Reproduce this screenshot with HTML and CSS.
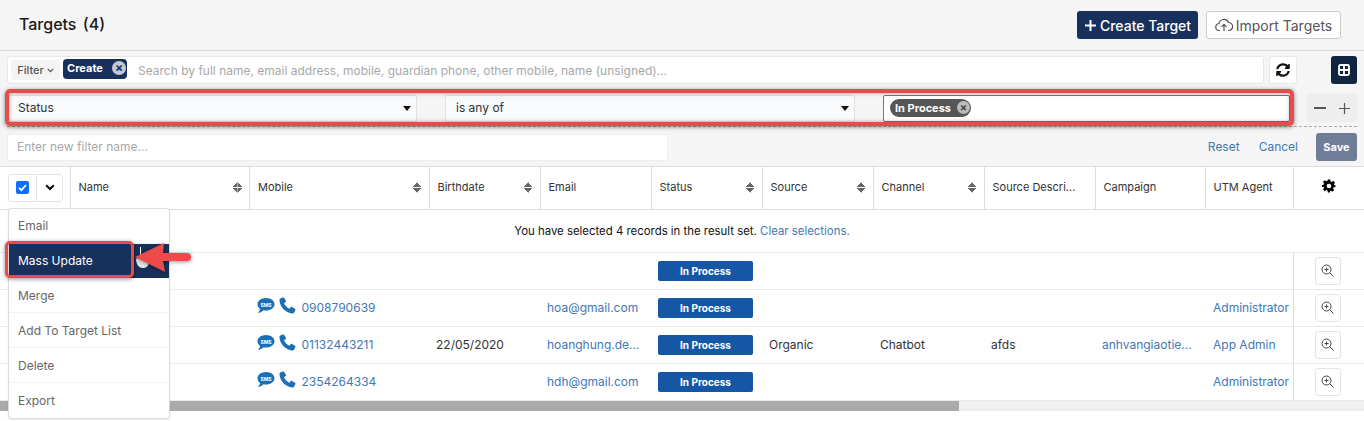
FILE: index.html
```html
<!DOCTYPE html>
<html>
<head>
	<meta charset="utf-8">
	<title>Targets</title>
	<link rel="stylesheet" href="styles.css">
</head>
<body>
	<div class="page">
		<div class="top">
			<h1 class="title">Targets <span class="count">(4)</span></h1>
			<div class="top-btns">
				<button class="btn-create"><svg width="13" height="13" viewBox="0 0 13 13"><path d="M6.500 1v11M1 6.500h11" stroke="#fff" stroke-width="2"/></svg>Create Target</button>
				<button class="btn-import"><svg width="18" height="14" viewBox="0 0 18 14" fill="none" stroke="#555" stroke-width="1.2"><path d="M5 12.500H4.500a3.500 3.500 0 0 1-.5-7 5 5 0 0 1 9.500-1 3.900 3.900 0 0 1 .2 8H13"/><path d="M9 13V6.500M6.500 8.800 9 6.300l2.500 2.500"/></svg>Import Targets</button>
			</div>
		</div>

		<div class="filters">
			<div class="search-row">
				<div class="search">
					<span class="filter-label">Filter <svg width="7" height="5" viewBox="0 0 7 5"><path d="M.7.800 3.500 3.600 6.300.800" fill="none" stroke="#555" stroke-width="1.200"/></svg></span>
					<span class="tag-create"><span class="tag-text">Create</span> <i class="tag-x">×</i></span>
					<span class="placeholder">Search by full name, email address, mobile, guardian phone, other mobile, name (unsigned)...</span>
				</div>
				<button class="btn-refresh"><svg width="14" height="14" viewBox="0 0 512 512"><path fill="#111" d="M370.720 133.280C339.458 104.008 298.888 87.962 255.848 88c-77.458.068-144.328 53.178-162.791 126.850-1.344 5.363-6.122 9.150-11.651 9.150H24.103c-7.498 0-13.194-6.807-11.807-14.176C33.933 94.924 134.813 8 256 8c66.448 0 126.791 26.136 171.315 68.685L463.030 40.970C478.149 25.851 504 36.559 504 57.941V192c0 13.255-10.745 24-24 24H345.941c-21.382 0-32.090-25.851-16.971-40.971l41.750-41.749zM32 296h134.059c21.382 0 32.090 25.851 16.971 40.971l-41.750 41.750c31.262 29.273 71.835 45.319 114.876 45.280 77.418-.07 144.315-53.144 162.787-126.849 1.344-5.363 6.122-9.150 11.651-9.150h57.304c7.498 0 13.194 6.807 11.807 14.176C478.067 417.076 377.187 504 256 504c-66.448 0-126.791-26.136-171.315-68.685L48.970 471.030C33.851 486.149 8 475.441 8 454.059V320c0-13.255 10.745-24 24-24z"/></svg></button>
				<button class="btn-grid"><svg width="12" height="12" viewBox="0 0 12 12" fill="none" stroke="#fff" stroke-width="1.800"><rect x="1" y="1" width="10" height="10" rx="1.500"/><path d="M1 6h10M6 1v10"/></svg></button>
			</div>

			<div class="cond-row">
				<div class="cond-sel cond-field"><span class="cond-text">Status</span><span class="caret"></span></div>
				<div class="cond-sel cond-op"><span class="cond-text">is any of</span><span class="caret"></span></div>
				<div class="cond-val"><span class="tag-val">In Process <i class="tag-val-x">×</i></span></div>
				<div class="cond-btns"><svg width="12" height="2" viewBox="0 0 12 2"><path d="M0 1h12" stroke="#555" stroke-width="2"/></svg><svg width="11" height="11" viewBox="0 0 11 11"><path d="M5.500 0v11M0 5.500h11" stroke="#555" stroke-width="1.200"/></svg></div>
				<div class="mark mark-filter"></div>
			</div>

			<div class="name-row">
				<div class="name-input">Enter new filter name...</div>
				<div class="name-actions">
					<a class="link">Reset</a>
					<a class="link">Cancel</a>
					<button class="btn-save">Save</button>
				</div>
			</div>
		</div>

		<div class="table-wrap">
			<table class="grid">
				<colgroup>
					<col class="c-check"><col class="c-wide"><col class="c-wide"><col class="c-std"><col class="c-std"><col class="c-std"><col class="c-std"><col class="c-std"><col class="c-std"><col class="c-camp"><col class="c-agent"><col>
				</colgroup>
				<thead>
					<tr>
						<th class="check-th"><div class="check-group"><span class="check-cell"><svg width="13" height="13" viewBox="0 0 13 13"><rect width="13" height="13" rx="2" fill="#0d6efd"/><path d="M3 6.800 5.400 9.200 10 4" fill="none" stroke="#fff" stroke-width="1.800"/></svg></span><span class="check-more"><svg width="10" height="7" viewBox="0 0 10 7"><path d="M1.200 1.200 5 5l3.800-3.800" fill="none" stroke="#000" stroke-width="2"/></svg></span></div></th>
						<th><div class="th-in">Name<span class="sort"></span></div></th>
						<th><div class="th-in">Mobile<span class="sort"></span></div></th>
						<th><div class="th-in">Birthdate<span class="sort"></span></div></th>
						<th><div class="th-in">Email</div></th>
						<th><div class="th-in">Status<span class="sort"></span></div></th>
						<th><div class="th-in">Source<span class="sort"></span></div></th>
						<th><div class="th-in">Channel<span class="sort"></span></div></th>
						<th><div class="th-in">Source Descri...</div></th>
						<th><div class="th-in">Campaign</div></th>
						<th><div class="th-in">UTM Agent</div></th>
						<th class="gear-th"><svg width="14" height="14" viewBox="0 0 24 24"><path fill="#000" fill-rule="evenodd" d="M10 1h4l.7 3.200 1.900.8 2.800-1.800 2.800 2.800-1.800 2.800.8 1.900L23 10.400v3.200l-3.200.7-.8 1.900 1.800 2.800-2.800 2.800-2.800-1.800-1.900.8L14 23h-4l-.7-3.200-1.900-.8-2.800 1.800-2.800-2.800 1.800-2.800-.8-1.900L0 13.600v-3.200l2.800-.7.800-1.900L1.800 5l2.800-2.800 2.800 1.800 1.900-.8zM12 8a4 4 0 1 0 0 8 4 4 0 0 0 0-8z"/></svg></th>
					</tr>
				</thead>
				<tbody>
					<tr class="sel-row">
						<td colspan="12">You have selected 4 records in the result set. <a class="link">Clear selections.</a></td>
					</tr>
					<tr>
						<td></td><td></td><td></td><td></td><td></td>
						<td><span class="badge">In Process</span></td>
						<td></td><td></td><td></td><td></td><td></td>
						<td class="act"><button class="btn-zoom"><svg width="13" height="13" viewBox="0 0 13 13" fill="none" stroke="#444" stroke-width="1"><circle cx="5.500" cy="5.500" r="4.500"/><path d="M8.800 8.800 12.500 12.500M5.500 3.500v4M3.500 5.500h4"/></svg></button></td>
					</tr>
					<tr>
						<td></td><td></td>
						<td><span class="phone"><svg class="ic-sms" width="18" height="16" viewBox="0 0 18 16"><path fill="#1a6fb5" d="M9 0c4.700 0 8.500 2.800 8.500 6.300S13.700 12.600 9 12.600c-.9 0-1.700-.1-2.500-.3C5.200 13.800 3.200 14.800.8 15c1.200-1 2-2.300 2.200-4C1.500 9.800.5 8.200.5 6.300.5 2.800 4.300 0 9 0z"/><text x="9" y="8.500" class="sms-txt">SMS</text></svg><svg class="ic-phone" width="17" height="17" viewBox="0 0 17 17"><path fill="#1a6fb5" d="M3.800.5 1.300 1.600C.6 2 .4 2.800.5 3.600c.6 6.500 5.900 12.200 12.800 12.900.8.100 1.500-.2 1.900-.9l1.200-2.500c.2-.5.100-1-.4-1.300l-3-1.900c-.4-.3-1-.2-1.300.2l-1.300 1.600C8 10.600 6 8.600 5 6.200L6.700 5c.4-.3.500-.9.200-1.300L5 .8C4.800.4 4.300.3 3.800.5z"/></svg><a class="link">0908790639</a></span></td>
						<td></td>
						<td><a class="link">hoa@gmail.com</a></td>
						<td><span class="badge">In Process</span></td>
						<td></td><td></td><td></td><td></td>
						<td class="agent"><a class="link">Administrator</a></td>
						<td class="act"><button class="btn-zoom"><svg width="13" height="13" viewBox="0 0 13 13" fill="none" stroke="#444" stroke-width="1"><circle cx="5.500" cy="5.500" r="4.500"/><path d="M8.800 8.800 12.500 12.500M5.500 3.500v4M3.500 5.500h4"/></svg></button></td>
					</tr>
					<tr>
						<td></td><td></td>
						<td><span class="phone"><svg class="ic-sms" width="18" height="16" viewBox="0 0 18 16"><path fill="#1a6fb5" d="M9 0c4.700 0 8.500 2.800 8.500 6.300S13.700 12.600 9 12.600c-.9 0-1.700-.1-2.500-.3C5.200 13.800 3.200 14.800.8 15c1.200-1 2-2.300 2.200-4C1.500 9.800.5 8.200.5 6.300.5 2.800 4.300 0 9 0z"/><text x="9" y="8.500" class="sms-txt">SMS</text></svg><svg class="ic-phone" width="17" height="17" viewBox="0 0 17 17"><path fill="#1a6fb5" d="M3.800.5 1.300 1.600C.6 2 .4 2.800.5 3.600c.6 6.500 5.900 12.200 12.800 12.900.8.100 1.500-.2 1.900-.9l1.200-2.500c.2-.5.100-1-.4-1.300l-3-1.900c-.4-.3-1-.2-1.300.2l-1.300 1.600C8 10.600 6 8.600 5 6.200L6.700 5c.4-.3.500-.9.200-1.300L5 .8C4.800.4 4.300.3 3.800.5z"/></svg><a class="link">01132443211</a></span></td>
						<td>22/05/2020</td>
						<td><a class="link">hoanghung.de...</a></td>
						<td><span class="badge">In Process</span></td>
						<td>Organic</td>
						<td>Chatbot</td>
						<td>afds</td>
						<td><a class="link">anhvangiaotie...</a></td>
						<td class="agent"><a class="link">App Admin</a></td>
						<td class="act"><button class="btn-zoom"><svg width="13" height="13" viewBox="0 0 13 13" fill="none" stroke="#444" stroke-width="1"><circle cx="5.500" cy="5.500" r="4.500"/><path d="M8.800 8.800 12.500 12.500M5.500 3.500v4M3.500 5.500h4"/></svg></button></td>
					</tr>
					<tr>
						<td></td><td></td>
						<td><span class="phone"><svg class="ic-sms" width="18" height="16" viewBox="0 0 18 16"><path fill="#1a6fb5" d="M9 0c4.700 0 8.500 2.800 8.500 6.300S13.700 12.600 9 12.600c-.9 0-1.700-.1-2.500-.3C5.200 13.800 3.200 14.800.8 15c1.200-1 2-2.300 2.200-4C1.500 9.800.5 8.200.5 6.300.5 2.800 4.300 0 9 0z"/><text x="9" y="8.500" class="sms-txt">SMS</text></svg><svg class="ic-phone" width="17" height="17" viewBox="0 0 17 17"><path fill="#1a6fb5" d="M3.800.5 1.300 1.600C.6 2 .4 2.800.5 3.600c.6 6.500 5.900 12.200 12.800 12.900.8.100 1.500-.2 1.900-.9l1.200-2.500c.2-.5.100-1-.4-1.300l-3-1.900c-.4-.3-1-.2-1.300.2l-1.300 1.600C8 10.600 6 8.600 5 6.200L6.700 5c.4-.3.500-.9.200-1.300L5 .8C4.800.4 4.300.3 3.800.5z"/></svg><a class="link">2354264334</a></span></td>
						<td></td>
						<td><a class="link">hdh@gmail.com</a></td>
						<td><span class="badge">In Process</span></td>
						<td></td><td></td><td></td><td></td>
						<td class="agent"><a class="link">Administrator</a></td>
						<td class="act"><button class="btn-zoom"><svg width="13" height="13" viewBox="0 0 13 13" fill="none" stroke="#444" stroke-width="1"><circle cx="5.500" cy="5.500" r="4.500"/><path d="M8.800 8.800 12.500 12.500M5.500 3.500v4M3.500 5.500h4"/></svg></button></td>
					</tr>
				</tbody>
			</table>
			<div class="scrollbar"><div class="thumb"></div></div>

			<ul class="menu">
				<li>Email</li>
				<li class="active">Mass Update</li>
				<li>Merge</li>
				<li>Add To Target List</li>
				<li>Delete</li>
				<li>Export</li>
			</ul>
			<div class="mark mark-item"></div>
			<svg class="cursor" width="16" height="22" viewBox="0 0 16 22"><path d="M5 0h1v10H5z" fill="#fff"/><path d="M1 12c3-2 11-2 13 0 1 4-1 9-6 9s-7-5-7-9z" fill="#e8e8e8"/></svg>
			<svg class="arrow" width="60" height="34" viewBox="0 0 60 34"><path d="M1 16 30 2l-1 10h24a4 4 0 0 1 0 8H29l2 11z" fill="#ed4a4a"/></svg>
		</div>
	</div>
</body>
</html>
```

FILE: styles.css
```css
* {
	margin: 0;
	padding: 0;
	box-sizing: border-box;
}
body {
	background: #fff;
	font-family: Inter, "Liberation Sans", sans-serif;
	font-size: 12px;
	color: #222;
}
button {
	font-family: inherit;
	cursor: pointer;
}
.page {
	height: 421px;
	overflow: hidden;
}
.link {
	color: #3f78b5;
	text-decoration: none;
}

/* top bar */
.top {
	height: 51px;
	background: #f5f5f5;
	border-bottom: 1px solid #ddd;
	display: flex;
	align-items: center;
	justify-content: space-between;
	padding: 0 23px 0 19px;
}
.title {
	font-size: 16px;
	font-weight: 500;
	color: #1a1a1a;
	padding-bottom: 2px;
}
.count {
	margin-left: 2px;
}
.top-btns {
	display: flex;
	gap: 8px;
}
.btn-create {
	height: 28px;
	width: 121px;
	background: #18305c;
	color: #fff;
	border: 0;
	border-radius: 3px;
	font-size: 14px;
	font-weight: 500;
	display: flex;
	align-items: center;
	justify-content: center;
	gap: 3px;
}
.btn-import {
	height: 28px;
	width: 135px;
	background: #fff;
	color: #555;
	border: 1px solid #ccc;
	border-radius: 3px;
	font-size: 14px;
	display: flex;
	align-items: center;
	justify-content: center;
	gap: 3px;
}

/* filter area */
.filters {
	height: 116px;
	background: #f5f5f5;
	border-bottom: 1px solid #ddd;
	padding: 5px 7px 0;
}
.search-row {
	display: flex;
	align-items: stretch;
	height: 28px;
}
.search {
	width: 1257px;
	background: #fff;
	border: 1px solid #e8e8e8;
	border-radius: 3px;
	display: flex;
	align-items: center;
	padding-left: 3px;
}
.filter-label {
	width: 49px;
	height: 20px;
	background: #f4f4f4;
	border-radius: 2px;
	color: #555;
	font-size: 11px;
	font-weight: 500;
	display: flex;
	align-items: center;
	justify-content: center;
	gap: 3px;
}
.tag-create {
	height: 20px;
	width: 64px;
	margin-left: 3px;
	margin-top: -2px;
	background: #18305c;
	color: #fff;
	border-radius: 4px;
	font-size: 11px;
	font-weight: 700;
	padding-left: 4px;
	display: flex;
	align-items: center;
	justify-content: space-between;
}
.tag-text {
	padding-bottom: 2px;
}
.tag-x {
	width: 14px;
	height: 14px;
	margin: -3px 1px 0 0;
	border-radius: 50%;
	background: #c3c9d4;
	color: #18305c;
	font-style: normal;
	font-weight: 700;
	font-size: 12px;
	line-height: 14px;
	text-align: center;
}
.placeholder {
	margin-left: 11px;
	color: #a8a8a8;
	font-size: 12px;
}
.btn-refresh {
	width: 28px;
	margin-left: 5px;
	background: #fff;
	border: 1px solid #e8e8e8;
	border-radius: 3px;
	display: flex;
	align-items: center;
	justify-content: center;
}
.btn-grid {
	width: 26px;
	margin-left: 34px;
	background: #0f2540;
	border: 0;
	border-radius: 3px;
	display: flex;
	align-items: center;
	justify-content: center;
}
.cond-row {
	position: relative;
	display: flex;
	height: 38px;
	margin-top: 5px;
	padding: 6px 0 5px 1px;
	border-bottom: 1px dashed #aaa;
}
.cond-sel {
	width: 409px;
	height: 27px;
	background: #f8fafc;
	border: 1px solid #e2e2e2;
	border-radius: 2px;
	padding: 0 9px;
	display: flex;
	align-items: center;
	justify-content: space-between;
	color: #333;
	font-size: 12px;
}
.cond-text {
	padding-bottom: 2px;
}
.cond-op {
	width: 410px;
	margin-left: 28px;
	padding-left: 10px;
}
.caret {
	width: 0;
	height: 0;
	margin: -1px -4px 0 0;
	border-left: 4px solid transparent;
	border-right: 4px solid transparent;
	border-top: 5px solid #111;
}
.cond-val {
	width: 407px;
	height: 27px;
	margin-left: 28px;
	background: #fff;
	border: 1px solid #777;
	border-radius: 2px;
	display: flex;
	align-items: center;
	padding-left: 6px;
}
.tag-val {
	height: 18px;
	width: 81px;
	margin-top: -2px;
	background: #565656;
	color: #fff;
	border-radius: 9px;
	font-size: 11px;
	font-weight: 700;
	padding: 0 1px 0 5px;
	display: flex;
	align-items: center;
	justify-content: space-between;
}
.tag-val-x {
	width: 13px;
	height: 13px;
	border-radius: 50%;
	background: #bbb;
	color: #444;
	font-style: normal;
	font-size: 11px;
	line-height: 13px;
	text-align: center;
}
.cond-btns {
	width: 50px;
	height: 28px;
	margin: -1px 0 0 17px;
	background: #eee;
	border-radius: 2px;
	display: flex;
	align-items: center;
	justify-content: space-around;
}
.mark {
	position: absolute;
	border: 4px solid #e64c4c;
	border-radius: 5px;
	box-shadow: 0 1px 4px rgba(0, 0, 0, .5), inset 0 0 4px rgba(0, 0, 0, .35);
	pointer-events: none;
}
.mark-filter {
	left: -2px;
	top: 0;
	width: 1289px;
	height: 37px;
}
.name-row {
	display: flex;
	align-items: center;
	justify-content: space-between;
	height: 28px;
	margin-top: 6px;
}
.name-input {
	width: 661px;
	height: 27px;
	background: #fff;
	border: 1px solid #eee;
	border-radius: 2px;
	padding-left: 9px;
	line-height: 23px;
	color: #a8a8a8;
	font-size: 12px;
}
.name-actions {
	display: flex;
	align-items: center;
}
.name-actions .link {
	padding-bottom: 2px;
}
.name-actions .link:nth-child(2) {
	margin-left: 19px;
}
.btn-save {
	width: 41px;
	height: 28px;
	margin-left: 18px;
	background: #6f7d98;
	color: #fff;
	border: 0;
	border-radius: 3px;
	font-size: 11px;
	font-weight: 700;
}

/* table */
.table-wrap {
	position: relative;
	background: #fff;
}
.grid {
	width: 1364px;
	border-collapse: collapse;
	table-layout: fixed;
	font-size: 12px;
}
.c-check { width: 70px; }
.c-wide { width: 179.500px; }
.c-std { width: 111px; }
.c-camp { width: 110px; }
.c-agent { width: 88px; }
.grid th {
	height: 42px;
	border-bottom: 1px solid #ddd;
	border-right: 1px solid #ddd;
	font-weight: 400;
	font-size: 11px;
	color: #333;
	text-align: left;
}
.grid th:last-child {
	border-right: 0;
}
.th-in {
	display: flex;
	align-items: center;
	justify-content: space-between;
	padding: 0 7px 2px 8px;
	height: 100%;
}
.sort {
	width: 9px;
	height: 11px;
	margin-top: 2px;
	background:
		linear-gradient(to bottom right, transparent 50%, #666 50%) 0 0 / 4.500px 5px no-repeat,
		linear-gradient(to bottom left, transparent 50%, #666 50%) 4.500px 0 / 4.500px 5px no-repeat,
		linear-gradient(to top right, transparent 50%, #666 50%) 0 6px / 4.500px 5px no-repeat,
		linear-gradient(to top left, transparent 50%, #666 50%) 4.500px 6px / 4.500px 5px no-repeat;
}
.check-th {
	padding-left: 8px;
}
.check-group {
	display: flex;
	width: 55px;
	height: 28px;
	border: 1px solid #e4e4e4;
	border-radius: 3px;
}
.check-cell {
	width: 28px;
	border-right: 1px solid #e4e4e4;
	display: flex;
	align-items: center;
	justify-content: center;
}
.check-more {
	flex: 1;
	display: flex;
	align-items: center;
	justify-content: center;
}
.grid .gear-th {
	text-align: center;
}
.grid td {
	height: 37px;
	padding: 0 7px;
	border-bottom: 1px solid #e9e9e9;
	white-space: nowrap;
	overflow: hidden;
	color: #333;
}
.grid .sel-row td {
	height: 43px;
	padding: 0;
	text-align: center;
	color: #111;
	font-size: 11.400px;
}
.grid td.agent {
	padding-left: 8px;
}
.grid td.act {
	border-left: 1px solid #ddd;
	padding: 0 0 0 21px;
}
.phone {
	display: flex;
	align-items: center;
}
.ic-sms {
	margin-top: -4px;
	flex: none;
}
.ic-phone {
	margin: -4px 0 0 4px;
	flex: none;
}
.phone .link {
	margin-left: 6px;
}
.sms-txt {
	font-size: 5px;
	font-weight: 700;
	fill: #fff;
	text-anchor: middle;
}
.badge {
	display: block;
	width: 95px;
	height: 20px;
	background: #1557a5;
	color: #fff;
	border-radius: 2px;
	font-size: 10px;
	font-weight: 700;
	line-height: 20px;
	text-align: center;
}
.btn-zoom {
	width: 26px;
	height: 28px;
	background: #fff;
	border: 1px solid #e4e4e4;
	border-radius: 3px;
	display: flex;
	align-items: center;
	justify-content: center;
}
.scrollbar {
	height: 10px;
	background: #f0f0f0;
}
.thumb {
	width: 959px;
	height: 10px;
	background: #aaa;
}

/* dropdown, drawn over the table */
.menu {
	position: absolute;
	left: 8px;
	top: 41px;
	width: 162px;
	height: 211px;
	background: #fff;
	border: 1px solid #ddd;
	border-radius: 3px;
	list-style: none;
	box-shadow: 0 1px 2px rgba(0, 0, 0, .1);
}
.menu li {
	height: 35px;
	line-height: 36px;
	padding-left: 9px;
	color: #666;
	border-bottom: 1px solid #f2f2f2;
}
.menu li:first-child {
	line-height: 34px;
}
.menu li:last-child {
	border-bottom: 0;
}
.menu li.active {
	background: #18305c;
	color: #fff;
	height: 34px;
	line-height: 34px;
	border-bottom: 0;
}
.mark-item {
	left: 5px;
	top: 74px;
	width: 129px;
	height: 37px;
	border-width: 3.500px;
	box-shadow: 0 1px 4px rgba(0, 0, 0, .45);
}
.cursor {
	position: absolute;
	left: 135px;
	top: 80px;
}
.arrow {
	position: absolute;
	left: 134px;
	top: 74px;
	filter: drop-shadow(0 1px 2px rgba(0, 0, 0, .4));
}
```
